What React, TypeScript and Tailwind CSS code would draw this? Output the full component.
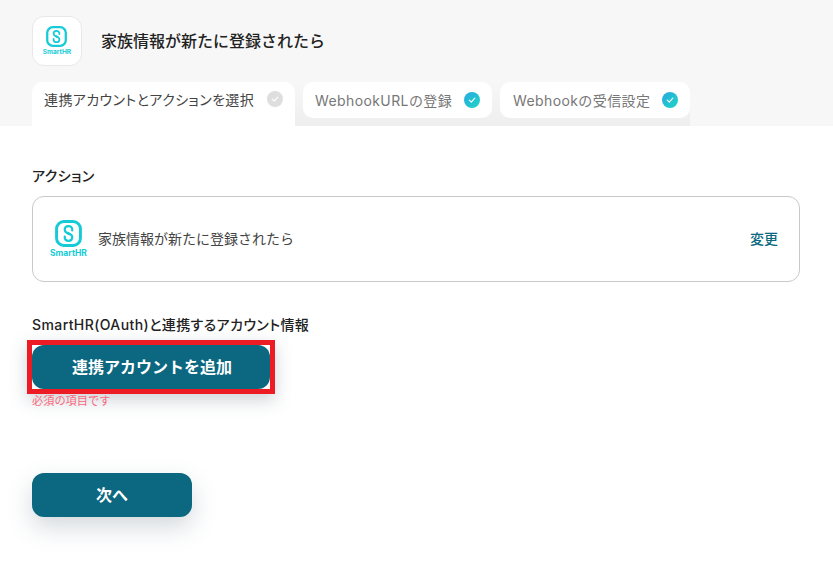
const FONT = "font-['Inter','Noto_Sans_CJK_JP',sans-serif]";
const PALT = "[font-feature-settings:'palt']";

const Logo = ({ size, textClass }: { size: number; textClass: string }) => (
  <div className="flex flex-col items-center">
    <svg width={size} height={size} viewBox="0 0 26 26" fill="none">
      <rect x="1.500" y="1.500" width="23" height="23" rx="7" stroke="#14cbd6" strokeWidth="2.800" />
      <path d="M16.600 10V9.400C16.600 7.300 15 6 13 6S9.400 7.300 9.400 9.400c0 1.300.6 2.100 1.600 2.700l2.400 1.400" stroke="#14cbd6" strokeWidth="2.200" strokeLinecap="round" />
      <path d="M9.400 16v.6c0 2.100 1.600 3.400 3.600 3.400s3.600-1.300 3.600-3.400c0-1.300-.6-2.100-1.600-2.700l-2.400-1.400" stroke="#14cbd6" strokeWidth="2.200" strokeLinecap="round" />
    </svg>
    <span className={`font-bold text-[#14cbd6] leading-none font-['Inter',sans-serif] ${textClass}`}>SmartHR</span>
  </div>
);

const Check = ({ done }: { done?: boolean }) => (
  <span
    className={`flex size-4 shrink-0 items-center justify-center rounded-full ${
      done ? "bg-gradient-to-br from-[#2aa8e0] to-[#1fd6c4]" : "bg-[#dedede]"
    }`}
  >
    <svg width="10" height="10" viewBox="0 0 10 10" fill="none">
      <path d="M2.300 5.200 4.300 7.100 7.800 3.200" stroke="white" strokeWidth="1.100" strokeLinecap="round" strokeLinejoin="round" />
    </svg>
  </span>
);

export default function App() {
  return (
    <div className={`h-[578px] w-[833px] overflow-hidden bg-white ${FONT}`}>
      <header className="h-[126px] bg-[#f7f7f7] px-8 pt-4">
        <div className="flex h-[50px] items-center gap-[19px]">
          <div className="flex size-[50px] items-center justify-center rounded-[12px] border border-[#e8e8e8] bg-white">
            <Logo size={21} textClass="mt-[2px] text-[6.500px]" />
          </div>
          <h1 className="text-[16px] font-medium text-[#222]">家族情報が新たに登録されたら</h1>
        </div>
        <div className="mt-4 flex h-11">
          <div className="flex h-11 w-[263px] items-start justify-between rounded-t-[10px] bg-white pl-3 pr-3 pt-[9px]">
            <span className={`whitespace-nowrap text-[14px] leading-[18px] tracking-[0.4px] text-[#444] ${PALT}`}>連携アカウントとアクションを選択</span>
            <Check />
          </div>
          <div className="flex h-11 w-[395px] gap-2 bg-gradient-to-b from-[#f7f7f7] to-[#eeeeee] pl-2">
            <div className="flex h-9 w-[189px] items-center justify-between rounded-[10px] bg-white pl-3 pr-3">
              <span className="whitespace-nowrap text-[14px] tracking-[0.4px] text-[#777]">WebhookURLの登録</span>
              <Check done />
            </div>
            <div className="flex h-9 w-[190px] items-center justify-between rounded-[10px] bg-white pl-[13px] pr-3">
              <span className="whitespace-nowrap text-[14px] tracking-[0.4px] text-[#777]">Webhookの受信設定</span>
              <Check done />
            </div>
          </div>
        </div>
      </header>

      <main className="px-8 pt-[41px]">
        <p className={`text-[14px] font-medium leading-[18px] tracking-[0.4px] text-[#222] ${PALT}`}>アクション</p>
        <section className="mt-[11px] flex h-[86px] w-[768px] items-center justify-between rounded-[12px] border border-[#c9c9c9] pl-[17px] pr-[21px]">
          <div className="flex items-center gap-[11px]">
            <Logo size={27} textClass="mt-[2px] text-[8.500px]" />
            <span className="pb-[2px] text-[14px] text-[#444]">家族情報が新たに登録されたら</span>
          </div>
          <span className="pb-[2px] text-[14px] font-medium text-[#0b6880]">変更</span>
        </section>

        <p className={`mt-[34px] whitespace-nowrap text-[14px] font-medium leading-[18px] tracking-[0.4px] text-[#222] ${PALT}`}>SmartHR(OAuth)と連携するアカウント情報</p>
        <div className="mt-[6px] w-fit">
          <div className="-ml-[5px] border-[5px] border-[#ed1c24] bg-white shadow-[0_6px_16px_rgba(60,80,100,0.25)]">
            <button className="flex h-11 w-[238px] items-center justify-center rounded-[12px] bg-[#0b6880] pl-[2px] text-[16px] font-bold text-white">
              連携アカウントを追加
            </button>
          </div>
        </div>
        <p className="text-[11.200px] leading-[14px] text-[#f8687c]">必須の項目です</p>

        <button className="mt-[65px] flex h-11 w-40 items-center justify-center rounded-[12px] bg-[#0b6880] text-[16px] font-bold text-white shadow-[0_10px_24px_rgba(60,80,100,0.22)]">
          次へ
        </button>
      </main>
    </div>
  );
}
